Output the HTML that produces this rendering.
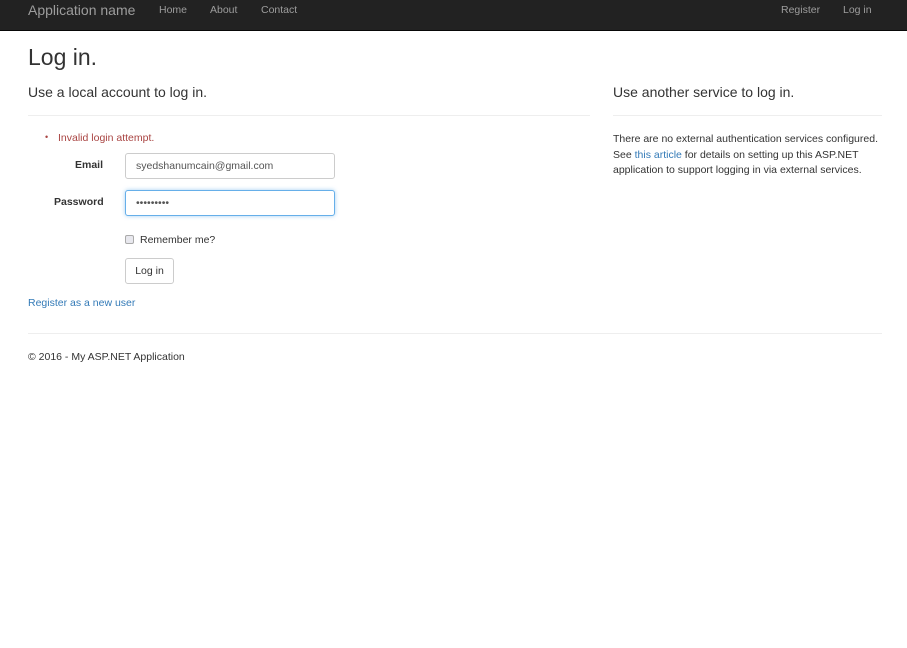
<!DOCTYPE html>
<html><head><style>
*{box-sizing:border-box;margin:0;padding:0}
body{width:907px;height:648px;background:#fff;font-family:"Liberation Sans",Arial,sans-serif;font-size:10.5px;color:#333;position:relative;overflow:hidden}
.nav{position:absolute;left:0;top:0;width:907px;height:31px;background:#222;border-bottom:1px solid #080808}
.nav span{position:absolute;top:4px;color:#9d9d9d;font-size:10.5px}
.a{position:absolute;white-space:nowrap}
.hr{position:absolute;height:1px;background:#eee}
input{position:absolute;border:1px solid #ccc;border-radius:3px;height:26px;font-family:inherit;font-size:10.5px;padding-left:10px;color:#555;background:#fff}
a{color:#337ab7;text-decoration:none}
</style></head><body>
<div class="nav">
<span style="left:28px;top:2px;font-size:14px">Application name</span>
<span style="left:159px">Home</span>
<span style="left:210px">About</span>
<span style="left:261px">Contact</span>
<span style="left:781px">Register</span>
<span style="left:843px">Log in</span>
</div>
<div class="a" style="left:28px;top:44px;font-size:23px;color:#333">Log in.</div>
<div class="a" style="left:28px;top:84px;font-size:14px">Use a local account to log in.</div>
<div class="a" style="left:613px;top:84px;font-size:14px">Use another service to log in.</div>
<div class="hr" style="left:28px;top:115px;width:562px"></div>
<div class="hr" style="left:613px;top:115px;width:269px"></div>
<div class="a" style="left:45px;top:132px;color:#a94442;font-size:9px">•</div>
<div class="a" style="left:58px;top:132px;color:#a94442">Invalid login attempt.</div>
<div class="a" style="left:75px;top:159px;font-weight:bold">Email</div>
<input style="left:125px;top:153px;width:210px" value="syedshanumcain@gmail.com">
<div class="a" style="left:54px;top:196px;font-weight:bold">Password</div>
<input style="left:125px;top:190px;width:210px;border-color:#66afe9;box-shadow:0 0 4px rgba(102,175,233,.6)" value="•••••••••">
<div class="a" style="left:125px;top:235px;width:9px;height:9px;border:1px solid #aaa;border-radius:2px;background:#e8e8ee"></div>
<div class="a" style="left:140px;top:234px">Remember me?</div>
<div class="a" style="left:125px;top:258px;width:49px;height:26px;border:1px solid #ccc;border-radius:3px;text-align:center;line-height:25px">Log in</div>
<div class="a" style="left:28px;top:297px"><a>Register as a new user</a></div>
<div class="a" style="left:613px;top:132px;line-height:15.5px;color:#333">There are no external authentication services configured.<br>See <a>this article</a> for details on setting up this ASP.NET<br>application to support logging in via external services.</div>
<div class="hr" style="left:28px;top:333px;width:854px"></div>
<div class="a" style="left:28px;top:351px">© 2016 - My ASP.NET Application</div>
</body></html>
